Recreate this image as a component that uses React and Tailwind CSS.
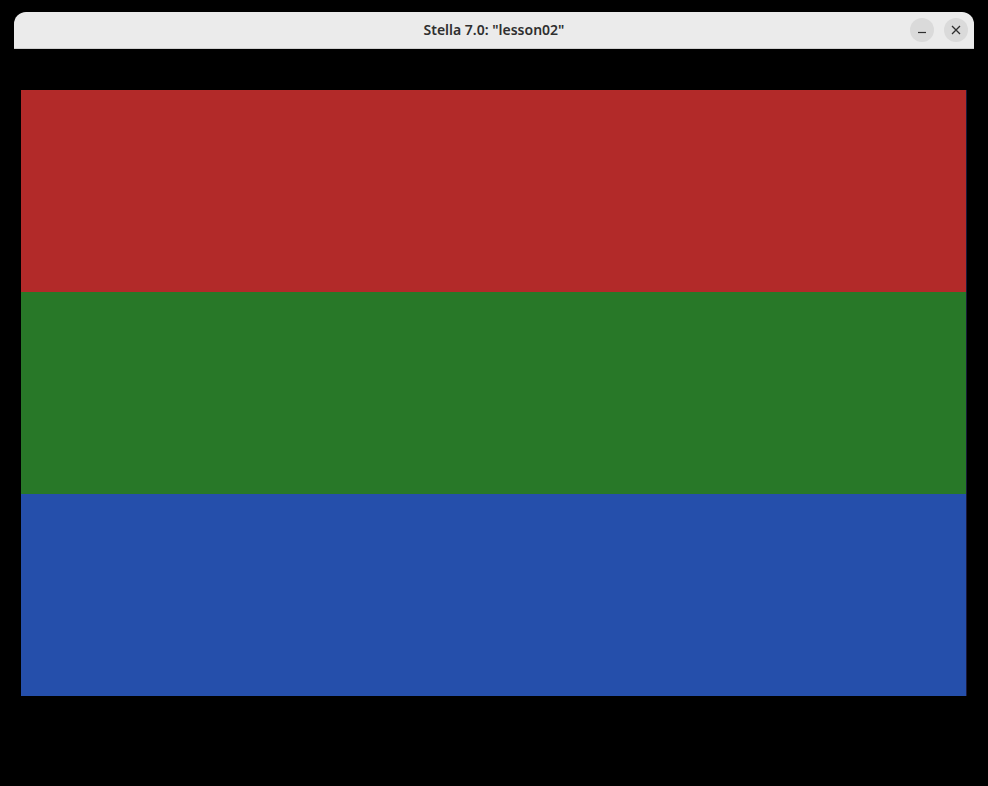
export default function App() {
  return (
    <div className="w-[988px] h-[786px] bg-black pt-[12px] px-[14px] overflow-hidden">
      <div className="flex flex-col h-full">
        <div className="relative h-[37px] bg-[#ebebeb] rounded-t-[12px] border-b border-[#cfcfcf] flex items-center justify-center">
          <span className="text-[14px] font-semibold text-[#2f2f2f] font-['Noto_Sans',sans-serif] leading-none">
            Stella 7.0: "lesson02"
          </span>
          <div className="absolute right-[6px] top-[6px] flex gap-[10px]">
            <button className="w-[24px] h-[24px] rounded-full bg-[#dadada] flex items-center justify-center">
              <svg width="10" height="10" viewBox="0 0 10 10">
                <path d="M1 7.5h8" stroke="#2f2f2f" strokeWidth="1.2" />
              </svg>
            </button>
            <button className="w-[24px] h-[24px] rounded-full bg-[#dadada] flex items-center justify-center">
              <svg width="10" height="10" viewBox="0 0 10 10">
                <path d="M1 1l8 8M9 1l-8 8" stroke="#2f2f2f" strokeWidth="1.3" />
              </svg>
            </button>
          </div>
        </div>
        <div className="flex-1 bg-black pt-[41px] pl-[6px] pr-[7px]">
          <div className="flex flex-col border-l border-black/40 border-r border-r-[#1a1a3a]">
            <div className="h-[202px] bg-[#b22a29]" />
            <div className="h-[202px] bg-[#287828]" />
            <div className="h-[202px] bg-[#254fab]" />
          </div>
        </div>
      </div>
    </div>
  )
}
